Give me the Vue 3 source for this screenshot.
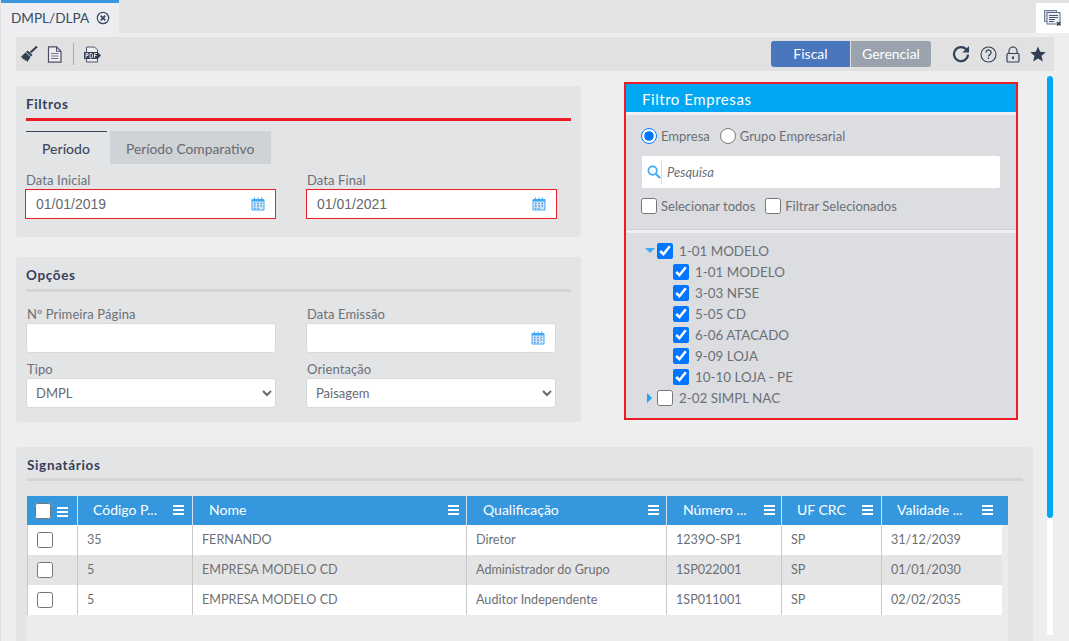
<script setup>
const children = ['1-01 MODELO', '3-03 NFSE', '5-05 CD', '6-06 ATACADO', '9-09 LOJA', '10-10 LOJA - PE']
const columns = [
  { label: 'Código P...', cls: 'c2' },
  { label: 'Nome', cls: 'c3' },
  { label: 'Qualificação', cls: 'c4' },
  { label: 'Número ...', cls: 'c5' },
  { label: 'UF CRC', cls: 'c6' },
  { label: 'Validade ...', cls: 'c7' }
]
const rows = [
  ['35', 'FERNANDO', 'Diretor', '1239O-SP1', 'SP', '31/12/2039'],
  ['5', 'EMPRESA MODELO CD', 'Administrador do Grupo', '1SP022001', 'SP', '01/01/2030'],
  ['5', 'EMPRESA MODELO CD', 'Auditor Independente', '1SP011001', 'SP', '02/02/2035']
]
const cellClasses = ['c2', 'c3', 'c4', 'c5', 'c6', 'c7']
</script>

<template>
  <div class="page">
    <header class="tabbar">
      <div class="doc-tab">
        <span>DMPL/DLPA</span>
        <svg class="tab-close" width="14" height="14" viewBox="0 0 14 14">
          <circle cx="7" cy="7" r="5.700" fill="none" stroke="#3b4a60" stroke-width="1.200" />
          <path d="M4.700 4.700l4.600 4.600M9.300 4.700l-4.600 4.600" stroke="#3b4a60" stroke-width="1.700" />
        </svg>
      </div>
      <div class="corner">
        <svg width="18" height="18" viewBox="0 0 18 18">
          <rect x=".5" y="1.500" width="12" height="11" fill="#cfd6e4" stroke="#6f7f98" />
          <rect x="3" y="3.500" width="13" height="11.500" fill="#eef0f4" stroke="#5f6f86" />
          <path d="M5 6.500h9M5 8.500h9M5 10.500h6M5 12.500h5" stroke="#4a586e" />
          <path d="M13 13l3.500 3.500M16.500 13L13 16.500" stroke="#2f3d52" stroke-width="1.300" />
        </svg>
      </div>
    </header>

    <div class="toolbar">
      <div class="tools">
        <svg class="broom" width="18" height="18" viewBox="0 0 18 18">
          <path d="M17 1.500l-6.500 6" stroke="#2f3d52" stroke-width="2" />
          <path d="M7.500 5.500l5 4.500-1.500 1.500-5-4.500z" fill="#2f3d52" />
          <path d="M5.500 7.500l5 4.500-3 5-1.500-2-1 1-.8-2.200-1.400.7-.6-2.300-1.700.1z" fill="#2f3d52" />
        </svg>
        <svg class="file" width="15" height="17" viewBox="0 0 15 17">
          <path d="M1.500.8h8l4.500 4.500v10.900h-12.500z" fill="#eceef2" stroke="#514a66" stroke-width="1.200" />
          <path d="M9.500.8v4.500h4.500" fill="none" stroke="#514a66" />
          <path d="M4 7.500h7.500M4 10h7.500M4 12.500h7.500" stroke="#6e7582" />
        </svg>
        <i class="sep"></i>
        <svg class="pdf" width="17" height="17" viewBox="0 0 17 17">
          <path d="M2.500 6v-5h8l3 3v12h-11v-3" fill="#eceef2" stroke="#4d5668" />
          <rect x="0" y="6" width="14" height="7" fill="#2f3d52" />
          <path d="M14 6.500l3 3-3 3z" fill="#2f3d52" />
          <path d="M2 12V7.500h2v2H2M6 7.500v4.500h1.500l1-1V8.500l-1-1zM10.500 12V7.500h2.500M10.500 9.500h2" fill="none" stroke="#f2f2f2" stroke-width=".9" />
        </svg>
      </div>
      <div class="tools-right">
        <div class="mode">
          <button class="mode-btn on" type="button">Fiscal</button>
          <button class="mode-btn" type="button">Gerencial</button>
        </div>
        <svg class="reload" width="18" height="18" viewBox="0 0 18 18">
          <path d="M14.800 5.200A7 7 0 1 0 16 9.500" fill="none" stroke="#33415a" stroke-width="2.200" />
          <path d="M17 1v6.500h-6.500z" fill="#33415a" />
        </svg>
        <svg class="help" width="17" height="17" viewBox="0 0 17 17">
          <circle cx="8.500" cy="8.500" r="7.500" fill="none" stroke="#33415a" stroke-width="1.100" />
          <path d="M6 6.500a2.500 2.500 0 1 1 3.800 2.100c-.9.600-1.300 1-1.300 2" fill="none" stroke="#33415a" stroke-width="1.300" />
          <rect x="7.800" y="11.500" width="1.400" height="1.500" fill="#33415a" />
        </svg>
        <svg class="lock" width="14" height="17" viewBox="0 0 14 17">
          <path d="M3 7.500V5a4 4 0 0 1 8 0v2.500" fill="none" stroke="#5a6678" stroke-width="1.500" />
          <rect x="1" y="7.500" width="12" height="8.500" rx="1" fill="#dfe0e2" stroke="#33415a" stroke-width="1.200" />
          <rect x="6" y="10.500" width="2" height="2.500" fill="#33415a" />
        </svg>
        <svg class="star" width="16" height="16" viewBox="0 0 16 16">
          <path d="M8 .5l2.200 5.300 5.600.4-4.300 3.600 1.400 5.600L8 12.400l-4.900 3 1.400-5.600L.2 6.200l5.600-.4z" fill="#2f3d52" />
        </svg>
      </div>
    </div>

    <main class="main">
      <div class="content">
        <div class="upper">
          <div class="left">
            <section class="panel filtros">
              <h2 class="title">Filtros</h2>
              <div class="rule red"></div>
              <div class="tabs">
                <div class="tab active">Período</div>
                <div class="tab">Período Comparativo</div>
              </div>
              <div class="form-grid date-row">
                <label class="field">
                  <span class="lbl">Data Inicial</span>
                  <span class="box invalid">
                    <input class="inp" value="01/01/2019" />
                    <svg class="cal" width="14" height="14" viewBox="0 0 14 14">
                      <path d="M1 2.500h12v10.500h-12z" fill="#cfe8fb" stroke="#3ea9f5" />
                      <path d="M1 2h12v2.500h-12z" fill="#3ea9f5" />
                      <path d="M3.500.5v3M7 .5v3M10.500.5v3" stroke="#3ea9f5" />
                      <path d="M3 6.500h1.500M6.300 6.500h1.500M9.500 6.500h1.500M3 9h1.500M6.300 9h1.500M9.500 9h1.500M3 11.300h1.500M6.300 11.300h1.500" stroke="#5b8fc9" stroke-width="1.300" />
                    </svg>
                  </span>
                </label>
                <label class="field">
                  <span class="lbl">Data Final</span>
                  <span class="box invalid">
                    <input class="inp" value="01/01/2021" />
                    <svg class="cal" width="14" height="14" viewBox="0 0 14 14">
                      <path d="M1 2.500h12v10.500h-12z" fill="#cfe8fb" stroke="#3ea9f5" />
                      <path d="M1 2h12v2.500h-12z" fill="#3ea9f5" />
                      <path d="M3.500.5v3M7 .5v3M10.500.5v3" stroke="#3ea9f5" />
                      <path d="M3 6.500h1.500M6.300 6.500h1.500M9.500 6.500h1.500M3 9h1.500M6.300 9h1.500M9.500 9h1.500M3 11.300h1.500M6.300 11.300h1.500" stroke="#5b8fc9" stroke-width="1.300" />
                    </svg>
                  </span>
                </label>
              </div>
            </section>

            <section class="panel opcoes">
              <h2 class="title">Opções</h2>
              <div class="rule grey"></div>
              <div class="form-grid two-rows">
                <label class="field">
                  <span class="lbl">Nº Primeira Página</span>
                  <span class="box"><input class="inp" /></span>
                </label>
                <label class="field">
                  <span class="lbl">Data Emissão</span>
                  <span class="box">
                    <input class="inp" />
                    <svg class="cal" width="14" height="14" viewBox="0 0 14 14">
                      <path d="M1 2.500h12v10.500h-12z" fill="#cfe8fb" stroke="#3ea9f5" />
                      <path d="M1 2h12v2.500h-12z" fill="#3ea9f5" />
                      <path d="M3.500.5v3M7 .5v3M10.500.5v3" stroke="#3ea9f5" />
                      <path d="M3 6.500h1.500M6.300 6.500h1.500M9.500 6.500h1.500M3 9h1.500M6.300 9h1.500M9.500 9h1.500M3 11.300h1.500M6.300 11.300h1.500" stroke="#5b8fc9" stroke-width="1.300" />
                    </svg>
                  </span>
                </label>
                <label class="field">
                  <span class="lbl">Tipo</span>
                  <span class="box">
                    <select class="sel"><option>DMPL</option><option>DLPA</option></select>
                  </span>
                </label>
                <label class="field">
                  <span class="lbl">Orientação</span>
                  <span class="box">
                    <select class="sel"><option>Paisagem</option><option>Retrato</option></select>
                  </span>
                </label>
              </div>
            </section>
          </div>

          <aside class="empresas">
            <div class="emp-head">Filtro Empresas</div>
            <div class="emp-body">
              <div class="emp-controls">
                <div class="line radios">
                  <label class="opt"><input type="radio" name="tipo" checked /><span>Empresa</span></label>
                  <label class="opt"><input type="radio" name="tipo" /><span>Grupo Empresarial</span></label>
                </div>
                <div class="search">
                  <svg width="14" height="14" viewBox="0 0 15 15">
                    <circle cx="6" cy="6" r="4.500" fill="none" stroke="#3ea9f5" stroke-width="1.800" />
                    <path d="M9.500 9.500l4.500 4.500" stroke="#3ea9f5" stroke-width="2.200" />
                  </svg>
                  <i class="search-sep"></i>
                  <input class="search-inp" placeholder="Pesquisa" />
                </div>
                <div class="line checks">
                  <label class="opt"><input type="checkbox" /><span>Selecionar todos</span></label>
                  <label class="opt"><input type="checkbox" /><span>Filtrar Selecionados</span></label>
                </div>
              </div>
              <div class="tree">
                <div class="node">
                  <i class="arrow down"></i>
                  <input type="checkbox" checked />
                  <span>1-01 MODELO</span>
                </div>
                <div v-for="c in children" :key="c" class="node child">
                  <input type="checkbox" checked />
                  <span>{{ c }}</span>
                </div>
                <div class="node">
                  <i class="arrow right"></i>
                  <input type="checkbox" />
                  <span>2-02 SIMPL NAC</span>
                </div>
              </div>
            </div>
          </aside>
        </div>

        <section class="panel signatarios">
          <h2 class="title">Signatários</h2>
          <div class="rule grey wide"></div>
          <div class="grid">
            <div class="g-head">
              <div class="hc c1">
                <input type="checkbox" />
                <span class="menu"><i></i><i></i><i></i></span>
              </div>
              <div v-for="col in columns" :key="col.label" class="hc" :class="col.cls">
                <span class="hc-label">{{ col.label }}</span>
                <span class="menu"><i></i><i></i><i></i></span>
              </div>
            </div>
            <div class="g-body">
              <div v-for="(r, i) in rows" :key="i" class="g-row" :class="{ odd: i === 1 }">
                <div class="cell c1"><input type="checkbox" /></div>
                <div v-for="(v, j) in r" :key="j" class="cell" :class="cellClasses[j]">{{ v }}</div>
              </div>
            </div>
          </div>
        </section>
      </div>

      <div class="scrolltrack"><div class="scrollthumb"></div></div>
    </main>
  </div>
</template>

<style scoped>
.page {
  width: 1069px;
  height: 641px;
  overflow: hidden;
  background: #eceef0;
  font-family: Lato, "Liberation Sans", sans-serif;
  color: #666a70;
  border-left: 1px solid #e2e2e2;
  box-sizing: border-box;
}
.tabbar {
  height: 33px;
  background: #e3e3e3;
  display: flex;
  justify-content: space-between;
}
.doc-tab {
  width: 118px;
  box-sizing: border-box;
  border-top: 3px solid #3b97dd;
  background: #eceef1;
  display: flex;
  align-items: center;
  padding-left: 10px;
  gap: 7px;
  font-size: 13.600px;
  color: #3a4a60;
}
.tab-close { flex: none; }
.corner {
  width: 33px;
  height: 30px;
  margin-top: 3px;
  background: #fff;
  display: flex;
  align-items: center;
  justify-content: center;
}
.toolbar {
  height: 34px;
  margin: 4px 15px 0;
  background: #e1e1e1;
  display: flex;
  align-items: center;
  justify-content: space-between;
}
.tools { display: flex; align-items: center; padding-left: 4px; }
.file { margin-left: 9px; }
.sep { width: 1px; height: 22px; background: #a9aeb4; margin: 0 10px 0 11px; }
.tools-right { display: flex; align-items: center; }
.mode { display: flex; gap: 1px; margin-right: 21px; }
.mode-btn {
  height: 26px;
  width: 80px;
  border: 0;
  padding: 0 0 2px;
  background: #9aa3ad;
  color: #fff;
  font: 14px Lato, "Liberation Sans", sans-serif;
  border-radius: 0 3px 3px 0;
}
.mode-btn.on { width: 79px; background: #4a76bd; border-radius: 3px 0 0 3px; }
.reload { margin-right: 10px; }
.help { margin-right: 9px; }
.lock { margin-right: 10px; }
.star { margin-right: 8px; }

.main { display: flex; }
.content { width: 1017px; margin-left: 15px; }
.upper { display: flex; margin-top: 11px; height: 376px; }
.left { width: 565px; padding-top: 4px; }
.panel { background: #e3e4e6; border-radius: 4px; box-sizing: border-box; }
.filtros { height: 151px; padding: 10px 10px 0; }
.opcoes { height: 165px; margin-top: 20px; padding: 10px 10px 0; }
.title {
  margin: 0;
  font-size: 13.500px;
  line-height: 17px;
  font-weight: 700;
  color: #33415a;
  letter-spacing: .65px;
}
.rule { margin-top: 5px; height: 3px; }
.rule.red { background: #ed1c24; }
.rule.grey { background: #d3d4d6; }
.tabs { display: flex; margin-top: 10px; gap: 3px; }
.tab {
  height: 33px;
  box-sizing: border-box;
  background: #d0d3d6;
  font-size: 13.800px;
  line-height: 36px;
  padding: 0 16px;
  width: 161px;
  color: #666a70;
  white-space: nowrap;
}
.tab.active {
  width: 81px;
  background: #e3e4e6;
  border-top: 1px solid #3b4a5c;
  line-height: 34px;
  font-size: 14px;
  font-weight: 500;
  color: #3d4a5c;
}
.form-grid {
  display: grid;
  grid-template-columns: 250px 250px;
  column-gap: 30px;
  row-gap: 7px;
}
.date-row { margin-top: 7px; column-gap: 31px; }
.date-row .box { margin-left: -1px; }
.two-rows { margin-top: 13px; }
.two-rows .lbl { padding-left: 1px; }
.field { display: block; }
.lbl {
  display: block;
  font-size: 13px;
  line-height: 18px;
  color: #6c7076;
  letter-spacing: .1px;
}
.box {
  position: relative;
  display: block;
  height: 30px;
  box-sizing: border-box;
  background: #fff;
  border: 1px solid #d8d9db;
  border-radius: 3px;
}
.box.invalid { border: 1px solid #ed1c24; border-radius: 0; }
.inp {
  width: 100%;
  height: 100%;
  box-sizing: border-box;
  border: 0;
  outline: 0;
  background: transparent;
  padding: 0 30px 0 10px;
  font: 14px "Liberation Sans", Arial, sans-serif;
  color: #666a70;
}
.cal { position: absolute; right: 10px; top: 7px; }
.sel {
  width: 100%;
  height: 100%;
  box-sizing: border-box;
  border: 0;
  outline: 0;
  background: transparent;
  padding: 0 5px;
  font: 13px Lato, "Liberation Sans", sans-serif;
  color: #666a70;
}

.empresas {
  width: 394px;
  height: 338px;
  margin-left: 43px;
  box-sizing: border-box;
  border: 2px solid #ed1c24;
  background: #eceef0;
  display: flex;
  flex-direction: column;
}
.emp-head {
  height: 28px;
  background: #00a8f3;
  color: #fff;
  font-size: 15px;
  line-height: 30px;
  padding-left: 16px;
  letter-spacing: .55px;
}
.emp-body { margin-top: 3px; flex: 1; background: #dcdde0; }
.emp-controls {
  height: 115px;
  box-sizing: border-box;
  border-bottom: 1px solid #cfd0d2;
  padding: 13px 15px 0;
}
.line { display: flex; align-items: center; height: 16px; }
.radios { gap: 10px; }
.checks { gap: 10px; }
.opt {
  display: flex;
  align-items: center;
  gap: 4px;
  font-size: 13px;
  color: #6c7076;
  white-space: nowrap;
}
input[type="checkbox"], input[type="radio"] {
  width: 16px;
  height: 16px;
  margin: 0;
  flex: none;
  accent-color: #0075ff;
}
.search {
  margin: 12px 0 10px 1px;
  width: 358px;
  height: 32px;
  background: #fff;
  border-radius: 2px;
  display: flex;
  align-items: center;
  padding-left: 5px;
  box-sizing: border-box;
}
.search-sep { width: 1px; height: 24px; background: #dcdde0; }
.search-inp {
  border: 0;
  outline: 0;
  flex: 1;
  min-width: 0;
  padding: 0 0 0 5px;
  background: transparent;
  font: italic 13px Lato, "Liberation Sans", sans-serif;
}
.search-inp::placeholder { color: #6c7076; opacity: 1; }
.tree { border-top: 3px solid #eceef0; padding-top: 7px; }
.node {
  height: 21px;
  display: flex;
  align-items: center;
  gap: 6px;
  padding-left: 31px;
  position: relative;
  font-size: 13.400px;
  color: #6c7076;
}
.node.child { padding-left: 47px; }
.arrow { position: absolute; width: 0; height: 0; }
.arrow.down {
  left: 19px;
  top: 8px;
  border-left: 5px solid transparent;
  border-right: 5px solid transparent;
  border-top: 5px solid #3ea9f5;
}
.arrow.right {
  left: 21px;
  top: 6px;
  border-top: 5px solid transparent;
  border-bottom: 5px solid transparent;
  border-left: 5px solid #18a5f2;
}

.signatarios {
  width: 1017px;
  height: 200px;
  margin-top: -11px;
  padding: 10px 10px 0 11px;
}
.signatarios .rule { margin-top: 4px; }
.grid {
  margin-top: 15px;
  width: 981px;
  height: 145px;
  background: #ececec;
}
.g-head { display: flex; height: 29px; background: #3597dd; }
.hc {
  box-sizing: border-box;
  display: flex;
  align-items: center;
  justify-content: space-between;
  border-right: 1px solid #d7e3ee;
  color: #fff;
  font-size: 14px;
  padding: 0 8px 3px 16px;
  white-space: nowrap;
}
.hc:last-child { border-right: 0; }
.hc.c1 { padding: 0 9px 0 8px; }
.hc.c2 { padding-left: 15px; }
.hc.c3, .hc.c4 { padding-right: 7px; }
.hc.c5 { padding-right: 6px; }
.hc.c6 { padding-left: 15px; }
.hc.c7 { padding-left: 15px; padding-right: 15px; width: 126px; }
.menu { display: flex; flex-direction: column; gap: 2px; width: 11px; flex: none; margin-top: 2px; }
.menu i { display: block; height: 2px; background: #fff; }
.g-body { width: 975px; background: #fff; }
.g-row { display: flex; height: 30px; background: #fff; }
.g-row.odd { background: #e4e4e4; }
.cell {
  box-sizing: border-box;
  display: flex;
  align-items: center;
  border-right: 1px solid #c9c9c9;
  font-size: 12.600px;
  color: #6c7076;
  padding-left: 9px;
  padding-bottom: 1px;
  white-space: nowrap;
}
.g-row .cell:first-child { border-left: 1px solid #c9c9c9; padding-left: 9px; padding-bottom: 0; }
.g-row .cell:last-child { border-right: 0; }
.c1 { width: 51px; }
.c2 { width: 115px; }
.c3 { width: 274px; }
.c4 { width: 200px; }
.c5 { width: 115px; }
.c6 { width: 100px; }
.c7 { width: 119px; }
.scrolltrack {
  margin: 5px 0 0 14px;
  width: 6px;
  height: 559px;
  background: #fff;
  border-radius: 3px 3px 0 0;
}
.scrollthumb {
  height: 442px;
  background: #00a8f3;
  border-radius: 3px;
}
</style>
